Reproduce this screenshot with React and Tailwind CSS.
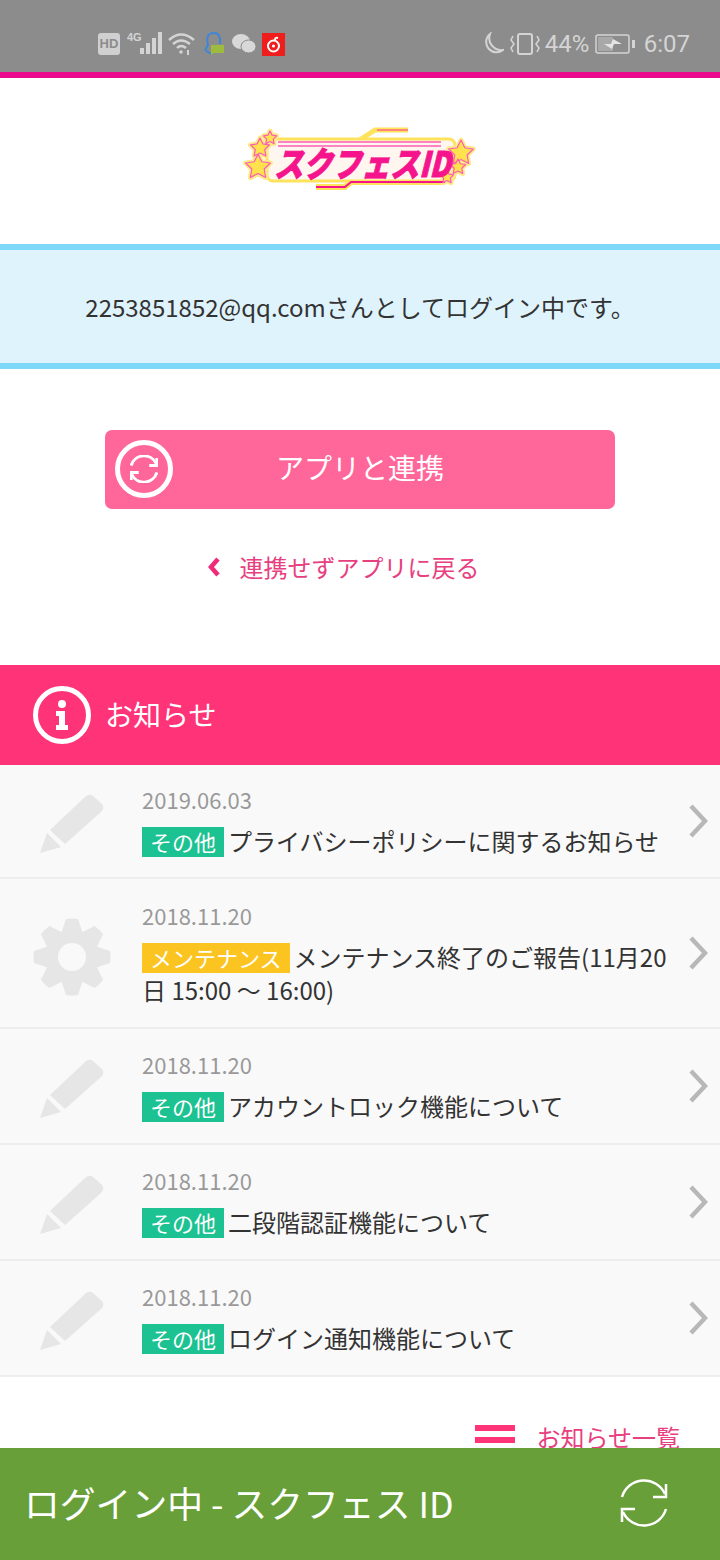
const FONT = "font-['Noto_Sans_CJK_JP','Noto_Sans',sans-serif]";

const notices = [
    { date: '2019.06.03', tag: 'その他', title: 'プライバシーポリシーに関するお知らせ', icon: 'pencil', rowClass: 'h-[114px]', bodyClass: 'pt-[19px]' },
    { date: '2018.11.20', tag: 'メンテナンス', title: 'メンテナンス終了のご報告(11月20日 15:00 〜 16:00)', icon: 'gear', rowClass: 'h-[150px]', bodyClass: 'pt-[21px]' },
    { date: '2018.11.20', tag: 'その他', title: 'アカウントロック機能について', icon: 'pencil', rowClass: 'h-[116px]', bodyClass: 'pt-[20px]' },
    { date: '2018.11.20', tag: 'その他', title: '二段階認証機能について', icon: 'pencil', rowClass: 'h-[116px]', bodyClass: 'pt-[20px]' },
    { date: '2018.11.20', tag: 'その他', title: 'ログイン通知機能について', icon: 'pencil', rowClass: 'h-[116px]', bodyClass: 'pt-[20px]' },
];

function PencilIcon() {
    return (
        <svg width="66" height="60" viewBox="0 0 66 60" className="mt-[9px] ml-[39px]">
            <path d="M46 4 Q50 0 54 3 L63 11 Q66 15 62 19 L26 51 L11 37 Z" fill="#e6e6e6" />
            <path d="M8 40 L22 54 L1 60 Z" fill="#e6e6e6" />
        </svg>
    );
}

function GearIcon() {
    const teeth = [0, 45, 90, 135, 180, 225, 270, 315];
    return (
        <svg width="78" height="78" viewBox="0 0 78 78" className="mt-[18px] ml-[33px]">
            <g fill="#e6e6e6">
                {teeth.map((deg) => (
                    <path key={deg} d="M33 1 Q39 0 45 1 L50 16 L28 16 Z" transform={`rotate(${deg} 39 39)`} />
                ))}
                <circle cx="39" cy="39" r="26" />
            </g>
            <circle cx="39" cy="39" r="14" fill="#f9f9f9" />
        </svg>
    );
}

function SyncArrows({ size = 48, strokeWidth = 2.5 }) {
    return (
        <svg width={size} height={size} viewBox="0 0 48 48" fill="none" stroke="white" strokeWidth={strokeWidth}>
            <path d="M2 18 A23 23 0 0 1 45 15" />
            <path d="M46 5 L46 18 L33 18" />
            <path d="M46 30 A23 23 0 0 1 3 33" />
            <path d="M2 43 L2 30 L15 30" />
        </svg>
    );
}

function Logo() {
    const stars = [
        [15, 42, 13], [17, 23, 10], [27, 13, 7], [218, 28, 13], [215, 42, 8], [204, 52, 7],
    ];
    const starPath = (cx, cy, r) => {
        let pts = [];
        for (let i = 0; i < 10; i++) {
            const rad = i % 2 ? r * 0.5 : r;
            const a = (Math.PI / 5) * i - Math.PI / 2;
            pts.push(`${cx + rad * Math.cos(a)},${cy + rad * Math.sin(a)}`);
        }
        return pts.join(' ');
    };
    return (
        <svg width="234" height="70" viewBox="0 0 234 70" fill="none">
            {/* yellow halo round the whole mark */}
            <path d="M30 18 L112 18 L132 5 L165 5" stroke="#ffe35c" strokeWidth="5" />
            <path d="M73 62 L102 62 L108 57 L202 57" stroke="#ffe35c" strokeWidth="6" />
            <rect x="24" y="14" width="188" height="42" rx="6" fill="#fff6f0" stroke="#ffe35c" strokeWidth="3" />
            {stars.map(([x, y, r]) => (
                <polygon key={`halo-${x}-${y}`} points={starPath(x, y, r)} fill="#ffe35c" stroke="#ffe98a" strokeWidth="5" strokeLinejoin="round" />
            ))}
            <path d="M134 5 L165 5" stroke="#ff2d9b" strokeWidth="1" />
            <path d="M35 17 L198 17" stroke="#ff5cb4" strokeWidth="1.5" />
            <path d="M35 21 L198 21" stroke="#ff5cb4" strokeWidth="1.5" />
            <path d="M73 62 L102 62 L108 57 L202 57" stroke="#f5148c" strokeWidth="2" />
            {stars.map(([x, y, r]) => (
                <polygon key={`${x}-${y}`} points={starPath(x, y, r)} fill="#ffe24d" stroke="#ff5cb4" strokeWidth="1.2" strokeLinejoin="round" />
            ))}
            <text fontSize="29" fontWeight="900" fontFamily="Noto Sans CJK JP" fill="#f5148c" stroke="#f5148c" strokeWidth="0.8" transform="translate(31 52) skewX(-14) scale(1 1.2)">
                スクフェスID
            </text>
        </svg>
    );
}

function StatusBar() {
    return (
        <div className="flex h-[72px] items-center justify-between bg-[#8c8c8c] pl-[98px] pr-[30px] pt-[16px] text-[#d4d4d4]">
            <div className="flex items-center">
                <span className="flex h-[22px] w-[22px] items-center justify-center rounded-[3px] bg-[#d0d0d0] font-['Liberation_Sans',sans-serif] text-[13px] font-bold text-[#8c8c8c]">HD</span>
                <svg width="36" height="24" viewBox="0 0 36 24" className="ml-[7px]" fill="#d4d4d4">
                    <text x="0" y="9" fontSize="11" fontWeight="700" fontFamily="Liberation Sans">4G</text>
                    <rect x="13" y="16" width="4" height="6" />
                    <rect x="19" y="11" width="4" height="11" />
                    <rect x="25" y="6" width="4" height="16" />
                    <rect x="31" y="0" width="4" height="22" />
                </svg>
                <svg width="28" height="24" viewBox="0 0 28 24" className="ml-[5px]" fill="none" stroke="#d4d4d4" strokeWidth="2.4">
                    <path d="M1 8 Q13 -3 26 8" />
                    <path d="M5 12 Q13 5 22 12" />
                    <path d="M9 16 Q13 12 18 16" />
                    <circle cx="13" cy="20" r="1.8" fill="#d4d4d4" stroke="none" />
                    <path d="M20 18 L20 23" strokeWidth="2" />
                </svg>
                <svg width="24" height="26" viewBox="0 0 24 26" className="ml-[6px]" fill="none">
                    <path d="M3 19 Q5 16 6 14 Q3 2 12 2 Q19 2 18 13" stroke="#3f86d6" strokeWidth="2" />
                    <path d="M3 19 L9 23" stroke="#3f86d6" strokeWidth="2" />
                    <path d="M9 14 H22 V22 H12 L9 24 Z" fill="#9cbb3f" />
                </svg>
                <svg width="24" height="20" viewBox="0 0 24 20" className="ml-[6px]" fill="#d8d8d8">
                    <ellipse cx="9" cy="7.5" rx="9" ry="7.5" />
                    <ellipse cx="16.5" cy="12.5" rx="7.5" ry="6.5" stroke="#8c8c8c" strokeWidth="1" />
                </svg>
                <svg width="23" height="23" viewBox="0 0 23 23" className="ml-[6px]">
                    <rect width="23" height="23" fill="#f01d1d" />
                    <circle cx="11.5" cy="13" r="5.5" fill="none" stroke="white" strokeWidth="2" />
                    <circle cx="11.5" cy="13" r="1.6" fill="white" />
                    <path d="M13 7 Q13 4 16 5" fill="none" stroke="white" strokeWidth="2" />
                </svg>
            </div>
            <div className="flex items-center">
                <svg width="23" height="24" viewBox="0 0 23 24" fill="none" stroke="#d4d4d4" strokeWidth="2">
                    <path d="M9 2 A10 10 0 1 0 22 18 A12 12 0 0 1 9 2 Z" />
                </svg>
                <svg width="30" height="24" viewBox="0 0 30 24" className="ml-[6px]" fill="none" stroke="#d4d4d4" strokeWidth="2">
                    <rect x="8" y="2" width="14" height="20" rx="2" />
                    <path d="M3 4 L1 8 L4 12 L1 16 L3 20" strokeWidth="1.6" />
                    <path d="M27 4 L29 8 L26 12 L29 16 L27 20" strokeWidth="1.6" />
                </svg>
                <span className="ml-[5px] w-[45px] font-['Roboto',sans-serif] text-[24px] leading-none">44%</span>
                <svg width="41" height="20" viewBox="0 0 41 20" className="ml-[5px]" fill="none">
                    <rect x="1" y="1" width="33" height="18" rx="2" stroke="#d4d4d4" strokeWidth="1.5" />
                    <rect x="3" y="3" width="15" height="14" fill="#a8a8a8" />
                    <path d="M9 10 L16 10 L18 5 L27 10 L19 10 L17 15 Z" fill="#e4e4e4" />
                    <rect x="37" y="6" width="3" height="8" fill="#d4d4d4" />
                </svg>
                <span className="ml-[8px] font-['Roboto',sans-serif] text-[24px] leading-none">6:07</span>
            </div>
        </div>
    );
}

function NoticeRow({ notice }) {
    const isMaintenance = notice.tag === 'メンテナンス';
    return (
        <div className={`flex items-center border-b-2 border-[#eeeeee] bg-[#f9f9f9] ${notice.rowClass}`}>
            <div className={`flex h-full w-[672px] ${notice.bodyClass}`}>
                <div className="w-[142px] shrink-0">
                    {notice.icon === 'pencil' ? <PencilIcon /> : <GearIcon />}
                </div>
                <div className="w-[530px]">
                    <div className="text-[22px] leading-[30px] text-[#999999]">{notice.date}</div>
                    <div className="mt-[10px] text-[24px] leading-[33px] text-[#333333]">
                        <span className={`mr-[4px] inline-block h-[30px] px-[8px] align-[0px] text-[22px] leading-[29px] text-white ${isMaintenance ? 'bg-[#fbc421]' : 'bg-[#1cc291]'}`}>
                            {notice.tag}
                        </span>
                        {notice.title}
                    </div>
                </div>
            </div>
            <svg width="20" height="34" viewBox="0 0 20 34" fill="none" stroke="#b8b8b8" strokeWidth="4.5" className="ml-[16px]">
                <path d="M3 2 L17 17 L3 32" />
            </svg>
        </div>
    );
}

export default function App() {
    return (
        <div className={`relative h-[1560px] w-[720px] overflow-hidden bg-white ${FONT}`}>
            <StatusBar />
            <div className="h-[6px] bg-[#ec0a8c]" />

            <div className="flex h-[166px] items-center justify-center pb-[2px]">
                <Logo />
            </div>

            <div className="flex h-[125px] items-center justify-center border-y-[6px] border-[#7dd8fa] bg-[#dff3fd] text-[24px] text-[#333333]">
                2253851852@qq.comさんとしてログイン中です。
            </div>

            <div className="px-[105px] pt-[61px]">
                <div className="relative flex h-[79px] items-center justify-center rounded-[7px] bg-[#ff6699] pb-[6px] text-[28px] text-white">
                    <div className="absolute left-[10px] top-[10px] flex h-[58px] w-[58px] items-center justify-center rounded-full border-[5px] border-white">
                        <SyncArrows size={28} strokeWidth={5} />
                    </div>
                    アプリと連携
                </div>
            </div>

            <div className="mt-[39px] flex h-[38px] items-center justify-center pr-[34px] text-[24px] text-[#e8407f]">
                <svg width="14" height="20" viewBox="0 0 14 20" fill="none" stroke="#f02a78" strokeWidth="4.5" className="mr-[19px]">
                    <path d="M11 2 L4 10 L11 18" />
                </svg>
                連携せずアプリに戻る
            </div>

            <div className="mt-[79px] flex h-[100px] items-center bg-[#ff3377] pl-[33px] text-[28px] text-white">
                <div className="flex h-[58px] w-[58px] items-center justify-center rounded-full border-[5px] border-white">
                    <svg width="14" height="30" viewBox="0 0 14 30" fill="white">
                        <circle cx="7" cy="4" r="4" />
                        <path d="M1 11 L10 11 L10 25 L13 25 L13 30 L1 30 L1 25 L4 25 L4 16 L1 16 Z" />
                    </svg>
                </div>
                <span className="ml-[14px] mb-[2px]">お知らせ</span>
            </div>

            <div>
                {notices.map((notice) => (
                    <NoticeRow key={notice.title} notice={notice} />
                ))}
            </div>

            <div className="mt-[42px] flex items-center justify-end pr-[40px] text-[24px] text-[#e8407f]">
                <div className="mb-[6px] mr-[21px] flex w-[40px] flex-col gap-[6px]">
                    <div className="h-[6px] bg-[#ff3377]" />
                    <div className="h-[6px] bg-[#ff3377]" />
                </div>
                お知らせ一覧
            </div>

            <div className="absolute bottom-0 left-0 flex h-[112px] w-full items-center justify-between bg-[#689f38] pb-[2px] pl-[24px] pr-[52px] text-[35.8px] text-white">
                ログイン中 - スクフェス ID
                <SyncArrows />
            </div>
        </div>
    );
}
